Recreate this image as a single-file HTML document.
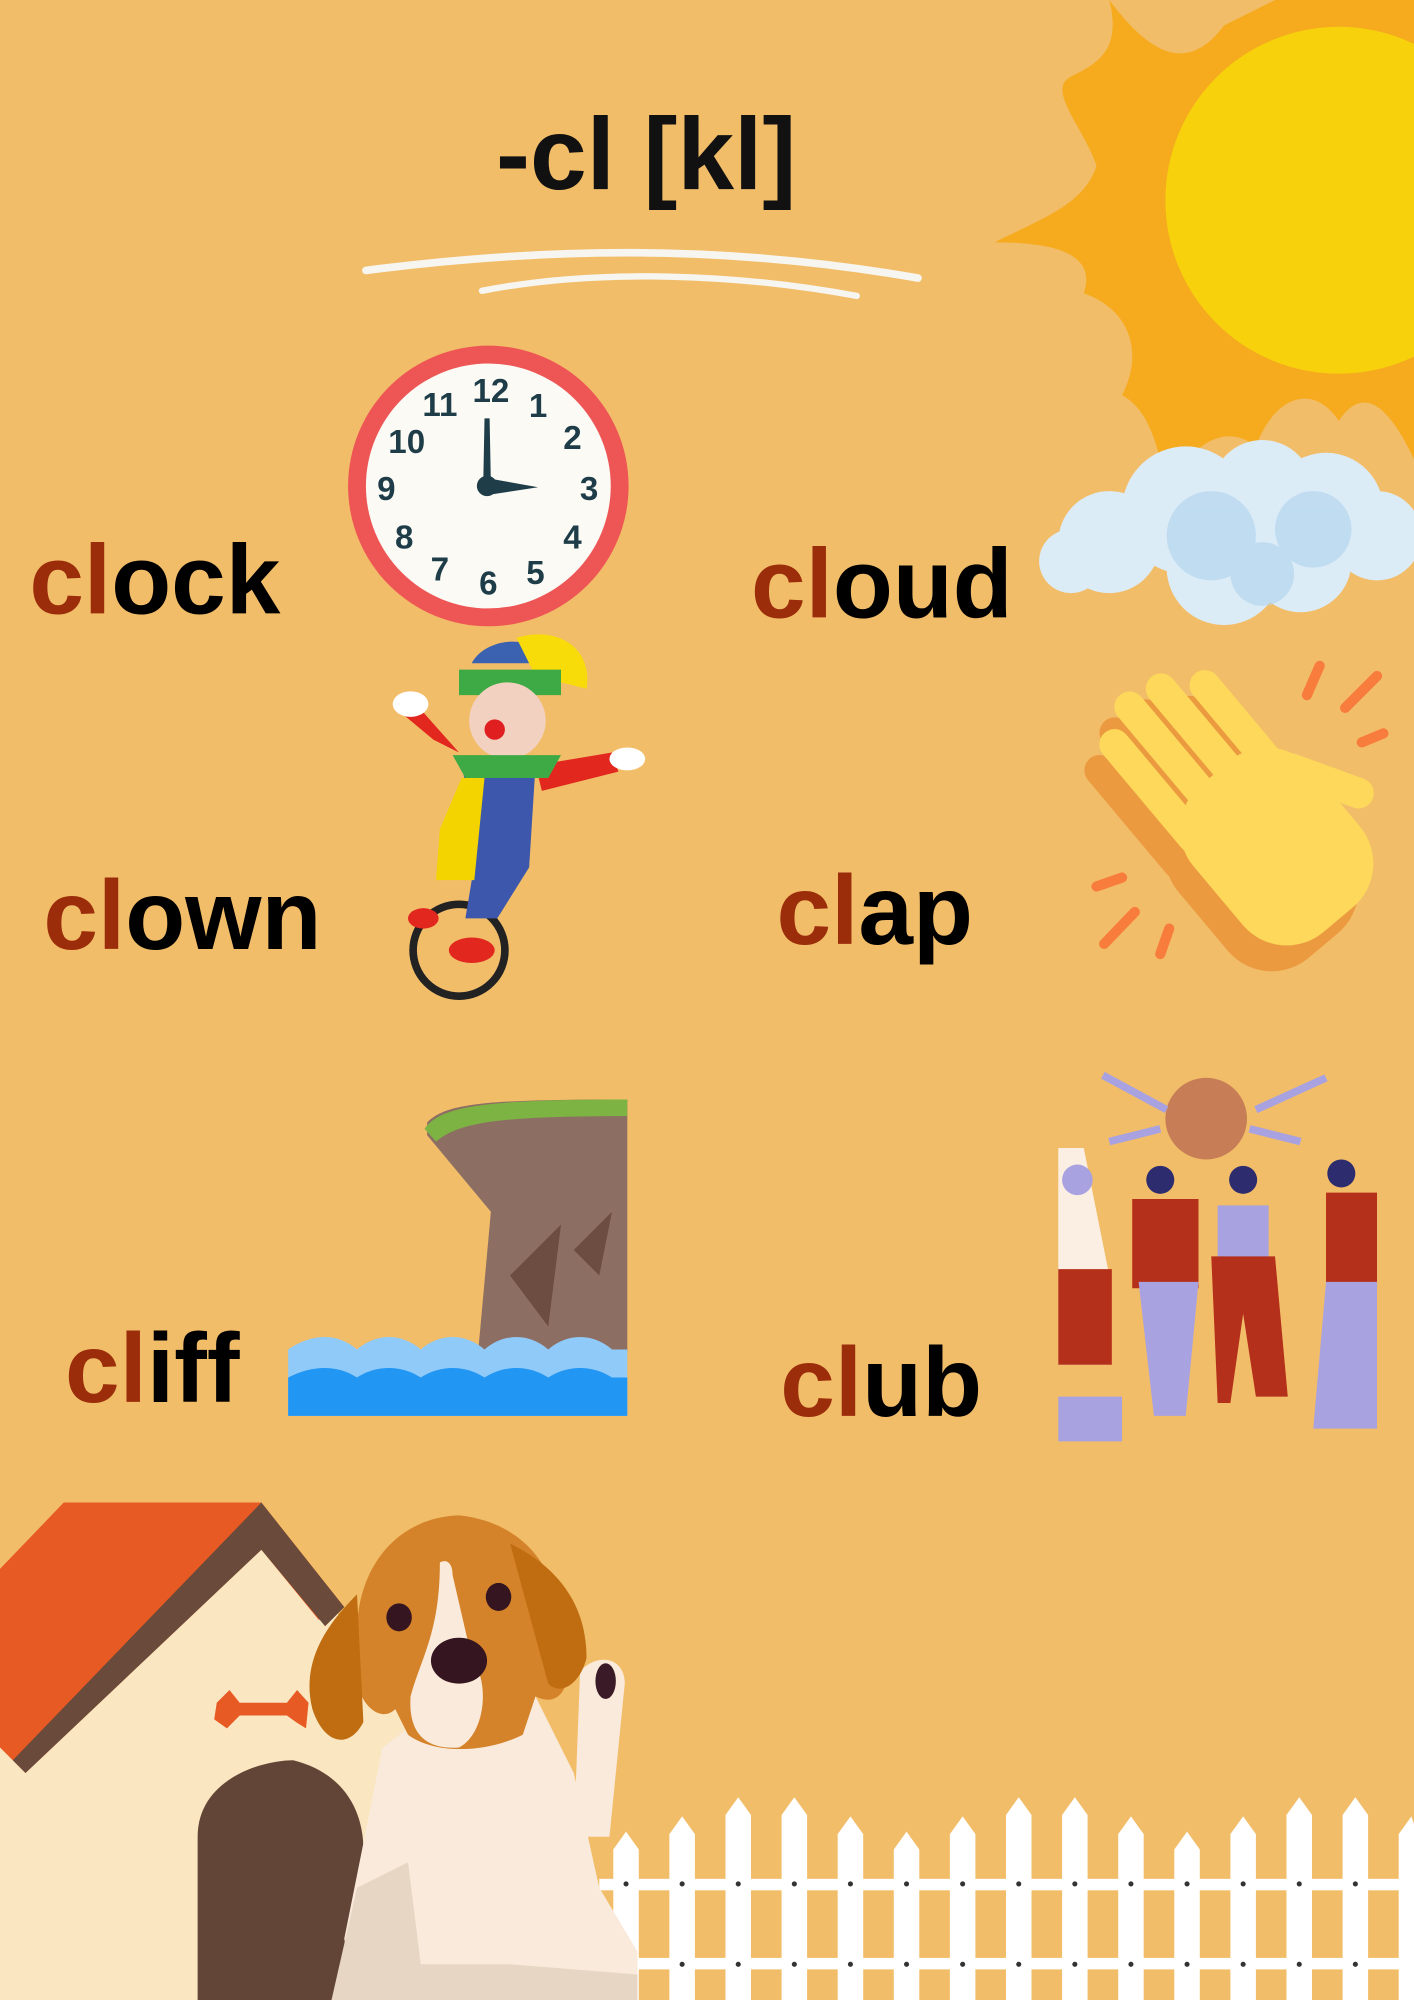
<!DOCTYPE html>
<html><head><meta charset="utf-8"><style>
html,body{margin:0;padding:0;background:#f2bd69;}
svg{display:block}
text{font-family:"Liberation Sans",sans-serif;font-weight:bold}
</style></head><body>
<svg width="1414" height="2000" viewBox="0 0 1109 1568" preserveAspectRatio="none" xmlns="http://www.w3.org/2000/svg">
<rect width="1109" height="1568" fill="#f2bd69"/>
<!-- sun -->
<g>
<path d="M870,0 C900,40 930,60 960,20 L1000,0 L1109,0 L1109,360 C1090,320 1070,300 1050,330 C1030,300 1000,310 985,350 C960,330 930,350 915,390 C910,350 900,320 880,310 C900,270 880,240 850,230 C860,200 830,190 780,190 C820,170 850,160 860,130 C850,100 820,70 840,60 C860,50 880,40 870,0Z" fill="#f6ab1f"/>
<circle cx="1050" cy="157" r="136" fill="#f7d10c"/>
</g>
<!-- title -->
<text x="389" y="148" font-size="80" fill="#111">-cl [kl]</text>
<path d="M287,212 C420,195 560,190 720,218" stroke="#f7f5ef" stroke-width="6" fill="none" stroke-linecap="round"/>
<path d="M378,228 C470,210 580,215 672,232" stroke="#f7f5ef" stroke-width="5" fill="none" stroke-linecap="round"/>
<!-- clock -->
<circle cx="383" cy="381" r="110" fill="#ee5555"/>
<circle cx="383" cy="381" r="96" fill="#fbfaf5"/>
<g font-size="26" fill="#1e3d48" text-anchor="middle">
<text x="385" y="315">12</text><text x="422" y="327">1</text><text x="449" y="352">2</text>
<text x="462" y="392">3</text><text x="449" y="430">4</text><text x="420" y="458">5</text>
<text x="383" y="466">6</text><text x="345" y="455">7</text><text x="317" y="430">8</text>
<text x="303" y="392">9</text><text x="319" y="355">10</text><text x="345" y="326">11</text>
</g>
<path d="M380,328 L384,328 L385,380 L379,380Z" fill="#1e3d48"/>
<path d="M383,375 L422,382 L383,388Z" fill="#1e3d48"/>
<circle cx="382" cy="381" r="8" fill="#1e3d48"/>
<!-- cloud -->
<g fill="#dcecf7">
<circle cx="870" cy="425" r="40"/><circle cx="930" cy="400" r="50"/><circle cx="990" cy="385" r="40"/>
<circle cx="1040" cy="400" r="45"/><circle cx="1080" cy="420" r="35"/><circle cx="960" cy="445" r="45"/>
<circle cx="1020" cy="440" r="40"/><circle cx="840" cy="440" r="25"/>
</g>
<g fill="#b5d6ee" opacity="0.7"><circle cx="950" cy="420" r="35"/><circle cx="1030" cy="415" r="30"/><circle cx="990" cy="450" r="25"/></g>
<!-- words -->
<g font-size="77">
<text x="23" y="481"><tspan fill="#9b2d0a">cl</tspan><tspan fill="#000">ock</tspan></text>
<text x="589" y="484"><tspan fill="#9b2d0a">cl</tspan><tspan fill="#000">oud</tspan></text>
<text x="34" y="744"><tspan fill="#9b2d0a">cl</tspan><tspan fill="#000">own</tspan></text>
<text x="609" y="740"><tspan fill="#9b2d0a">cl</tspan><tspan fill="#000">ap</tspan></text>
<text x="51" y="1099"><tspan fill="#9b2d0a">cl</tspan><tspan fill="#000">iff</tspan></text>
<text x="612" y="1110"><tspan fill="#9b2d0a">cl</tspan><tspan fill="#000">ub</tspan></text>
</g>
<!-- clown -->
<g>
<circle cx="360" cy="745" r="36" fill="none" stroke="#222" stroke-width="6"/>
<path d="M370,520 C380,500 420,495 430,520Z" fill="#3b62b0"/>
<path d="M405,500 C440,490 465,510 460,540 L420,530Z" fill="#f7dc0a"/>
<path d="M360,525 L440,525 L440,545 L360,545Z" fill="#3eaa45"/>
<circle cx="398" cy="565" r="30" fill="#f3d1c0"/>
<circle cx="388" cy="572" r="8" fill="#e02020"/>
<path d="M340,580 L310,555 L320,545 L360,590Z" fill="#e2271f"/>
<path d="M420,600 L480,590 L485,605 L425,620Z" fill="#e2271f"/>
<path d="M362,600 L420,600 L415,680 L390,720 L365,720 L375,660Z" fill="#3c57ab"/>
<path d="M362,610 L380,610 L372,690 L342,690 L345,650Z" fill="#f4d400"/>
<path d="M355,592 L440,592 L430,610 L365,610Z" fill="#3eaa45"/>
<ellipse cx="332" cy="720" rx="12" ry="8" fill="#e2271f"/>
<ellipse cx="370" cy="745" rx="18" ry="10" fill="#e2271f"/>
<ellipse cx="322" cy="552" rx="14" ry="10" fill="#fff"/><ellipse cx="492" cy="595" rx="14" ry="9" fill="#fff"/>
</g>
<!-- clap -->
<g transform="rotate(-40 975 640)">
<g fill="#ec9a40" transform="translate(-22 8)">
<rect x="920" y="600" width="120" height="150" rx="45"/>
<rect x="922" y="520" width="24" height="120" rx="12"/><rect x="950" y="505" width="24" height="130" rx="12"/>
<rect x="978" y="510" width="24" height="125" rx="12"/><rect x="1006" y="530" width="24" height="110" rx="12"/>
</g>
<g fill="#fdd85a">
<rect x="920" y="600" width="120" height="150" rx="45"/>
<rect x="922" y="520" width="24" height="120" rx="12"/><rect x="950" y="505" width="24" height="130" rx="12"/>
<rect x="978" y="510" width="24" height="125" rx="12"/><rect x="1006" y="530" width="24" height="110" rx="12"/>
<rect x="1030" y="620" width="24" height="80" rx="12" transform="rotate(-30 1042 660)"/>
</g>
</g>
<g stroke="#f87c3c" stroke-width="8" stroke-linecap="round">
<line x1="1025" y1="545" x2="1035" y2="522"/><line x1="1055" y1="555" x2="1080" y2="530"/><line x1="1068" y1="582" x2="1085" y2="575"/>
<line x1="860" y1="695" x2="880" y2="688"/><line x1="866" y1="740" x2="890" y2="715"/><line x1="910" y1="748" x2="917" y2="728"/>
</g>
<!-- cliff -->
<path d="M335,880 C350,865 380,862 492,862 L492,1060 L375,1060 L385,950 L335,890Z" fill="#8d6e63"/>
<path d="M400,1000 L440,960 L430,1040Z M450,980 L480,950 L470,1000Z" fill="#6d4c41"/>
<path d="M333,885 C345,868 375,862 492,862 L492,875 C390,875 360,880 342,895Z" fill="#7cb342"/>
<path d="M226,1058 C245,1045 265,1045 280,1058 C295,1045 315,1045 330,1058 C345,1045 365,1045 380,1058 C395,1045 415,1045 430,1058 C445,1045 465,1045 480,1058 L492,1058 L492,1110 L226,1110Z" fill="#90caf9"/>
<path d="M226,1080 C245,1070 265,1070 280,1080 C295,1070 315,1070 330,1080 C345,1070 365,1070 380,1080 C395,1070 415,1070 430,1080 C445,1070 465,1070 480,1080 L492,1080 L492,1110 L226,1110Z" fill="#2196f3"/>
<!-- club -->
<g>
<circle cx="946" cy="877" r="32" fill="#c77d55"/>
<path d="M865,843 L915,870 M1040,845 L985,870 M870,895 L910,885 M1020,895 L980,885" stroke="#a9a2e0" stroke-width="6"/>
<path d="M830,900 L850,900 L870,1000 L870,1070 L830,1070Z" fill="#fbefe3"/>
<path d="M830,995 L872,995 L872,1070 L830,1070Z" fill="#b5301b"/>
<path d="M830,1095 L880,1095 L880,1130 L830,1130Z" fill="#a9a2e0"/>
<path d="M888,940 L940,940 L940,1010 L888,1010Z" fill="#b5301b"/>
<path d="M893,1005 L940,1005 L930,1110 L905,1110Z" fill="#a9a2e0"/>
<path d="M955,945 L995,945 L995,990 L955,990Z" fill="#a9a2e0"/>
<path d="M950,985 L1000,985 L1010,1095 L985,1095 L975,1030 L965,1100 L955,1100Z" fill="#b5301b"/>
<path d="M1040,935 L1080,935 L1080,1010 L1040,1010Z" fill="#b5301b"/>
<path d="M1040,1005 L1080,1005 L1080,1120 L1030,1120Z" fill="#a9a2e0"/>
<circle cx="845" cy="925" r="12" fill="#a9a2e0"/><circle cx="910" cy="925" r="11" fill="#2c2c6e"/>
<circle cx="975" cy="925" r="11" fill="#2c2c6e"/><circle cx="1052" cy="920" r="11" fill="#2c2c6e"/>
</g>
<!-- fence -->
<g fill="#fff">
<rect x="470" y="1473" width="639" height="9"/><rect x="470" y="1535" width="639" height="9"/>
<path d="M481,1568 V1450 L491,1436 L501,1450 V1568Z"/>
<path d="M525,1568 V1438 L535,1424 L545,1438 V1568Z"/>
<path d="M569,1568 V1423 L579,1409 L589,1423 V1568Z"/>
<path d="M613,1568 V1423 L623,1409 L633,1423 V1568Z"/>
<path d="M657,1568 V1438 L667,1424 L677,1438 V1568Z"/>
<path d="M701,1568 V1450 L711,1436 L721,1450 V1568Z"/>
<path d="M745,1568 V1438 L755,1424 L765,1438 V1568Z"/>
<path d="M789,1568 V1423 L799,1409 L809,1423 V1568Z"/>
<path d="M833,1568 V1423 L843,1409 L853,1423 V1568Z"/>
<path d="M877,1568 V1438 L887,1424 L897,1438 V1568Z"/>
<path d="M921,1568 V1450 L931,1436 L941,1450 V1568Z"/>
<path d="M965,1568 V1438 L975,1424 L985,1438 V1568Z"/>
<path d="M1009,1568 V1423 L1019,1409 L1029,1423 V1568Z"/>
<path d="M1053,1568 V1423 L1063,1409 L1073,1423 V1568Z"/>
<path d="M1097,1568 V1438 L1107,1424 L1109,1430 V1568Z"/>
</g>
<g fill="#333">
<circle cx="491" cy="1477" r="2"/><circle cx="535" cy="1477" r="2"/><circle cx="579" cy="1477" r="2"/><circle cx="623" cy="1477" r="2"/><circle cx="667" cy="1477" r="2"/><circle cx="711" cy="1477" r="2"/><circle cx="755" cy="1477" r="2"/><circle cx="799" cy="1477" r="2"/><circle cx="843" cy="1477" r="2"/><circle cx="887" cy="1477" r="2"/><circle cx="931" cy="1477" r="2"/><circle cx="975" cy="1477" r="2"/><circle cx="1019" cy="1477" r="2"/><circle cx="1063" cy="1477" r="2"/>
<circle cx="491" cy="1540" r="2"/><circle cx="535" cy="1540" r="2"/><circle cx="579" cy="1540" r="2"/><circle cx="623" cy="1540" r="2"/><circle cx="667" cy="1540" r="2"/><circle cx="711" cy="1540" r="2"/><circle cx="755" cy="1540" r="2"/><circle cx="799" cy="1540" r="2"/><circle cx="843" cy="1540" r="2"/><circle cx="887" cy="1540" r="2"/><circle cx="931" cy="1540" r="2"/><circle cx="975" cy="1540" r="2"/><circle cx="1019" cy="1540" r="2"/><circle cx="1063" cy="1540" r="2"/>
</g>
<!-- dog house -->
<path d="M0,1260 L205,1215 L330,1320 L330,1568 L0,1568Z" fill="#fae7c2"/>
<path d="M0,1230 L0,1370 L20,1390 L205,1215 L250,1270 L270,1260 L205,1178 L50,1178Z" fill="#e85a23"/>
<path d="M205,1178 L270,1260 L255,1275 L205,1215 L20,1390 L10,1380Z" fill="#6a4a3a"/>
<path d="M155,1568 L155,1440 C155,1395 205,1380 230,1380 C270,1390 285,1420 285,1450 L285,1568Z" fill="#634537"/>
<path d="M170,1335 L180,1325 L188,1335 L225,1335 L233,1325 L242,1335 L240,1355 L232,1350 L225,1345 L188,1345 L178,1355 L168,1348Z" fill="#e85a23"/>
<!-- dog -->
<path d="M300,1370 L340,1340 L420,1330 L450,1390 L470,1480 L500,1530 L500,1568 L280,1568 L270,1520 Z" fill="#faeadb"/>
<path d="M280,1480 L320,1460 L330,1540 L400,1540 L500,1548 L500,1568 L260,1568 Z" fill="#e8d6c4"/>
<path d="M455,1310 C470,1295 490,1300 490,1320 L478,1440 L450,1440 Z" fill="#faeadb"/>
<ellipse cx="475" cy="1318" rx="8" ry="14" fill="#3a1a26"/>
<path d="M360,1188 C310,1190 280,1230 280,1280 L280,1320 C285,1340 300,1350 310,1340 L320,1360 C340,1375 380,1375 410,1360 L420,1330 C440,1340 450,1320 445,1290 C440,1240 420,1195 360,1188Z" fill="#d5832a"/>
<path d="M280,1250 C260,1270 235,1300 245,1340 C255,1370 275,1370 285,1350Z" fill="#bf6d10"/>
<path d="M400,1210 C440,1230 460,1260 460,1300 C455,1320 440,1330 430,1320Z" fill="#bf6d10"/>
<path d="M345,1225 C350,1222 355,1225 355,1235 L370,1300 C385,1320 380,1360 360,1370 C335,1372 320,1360 322,1330 C330,1300 345,1280 345,1225Z" fill="#faeadb"/>
<ellipse cx="360" cy="1302" rx="22" ry="18" fill="#35151f"/>
<ellipse cx="313" cy="1268" rx="10" ry="11" fill="#35151f"/>
<ellipse cx="391" cy="1252" rx="10" ry="11" fill="#35151f"/>
</svg>
</body></html>
